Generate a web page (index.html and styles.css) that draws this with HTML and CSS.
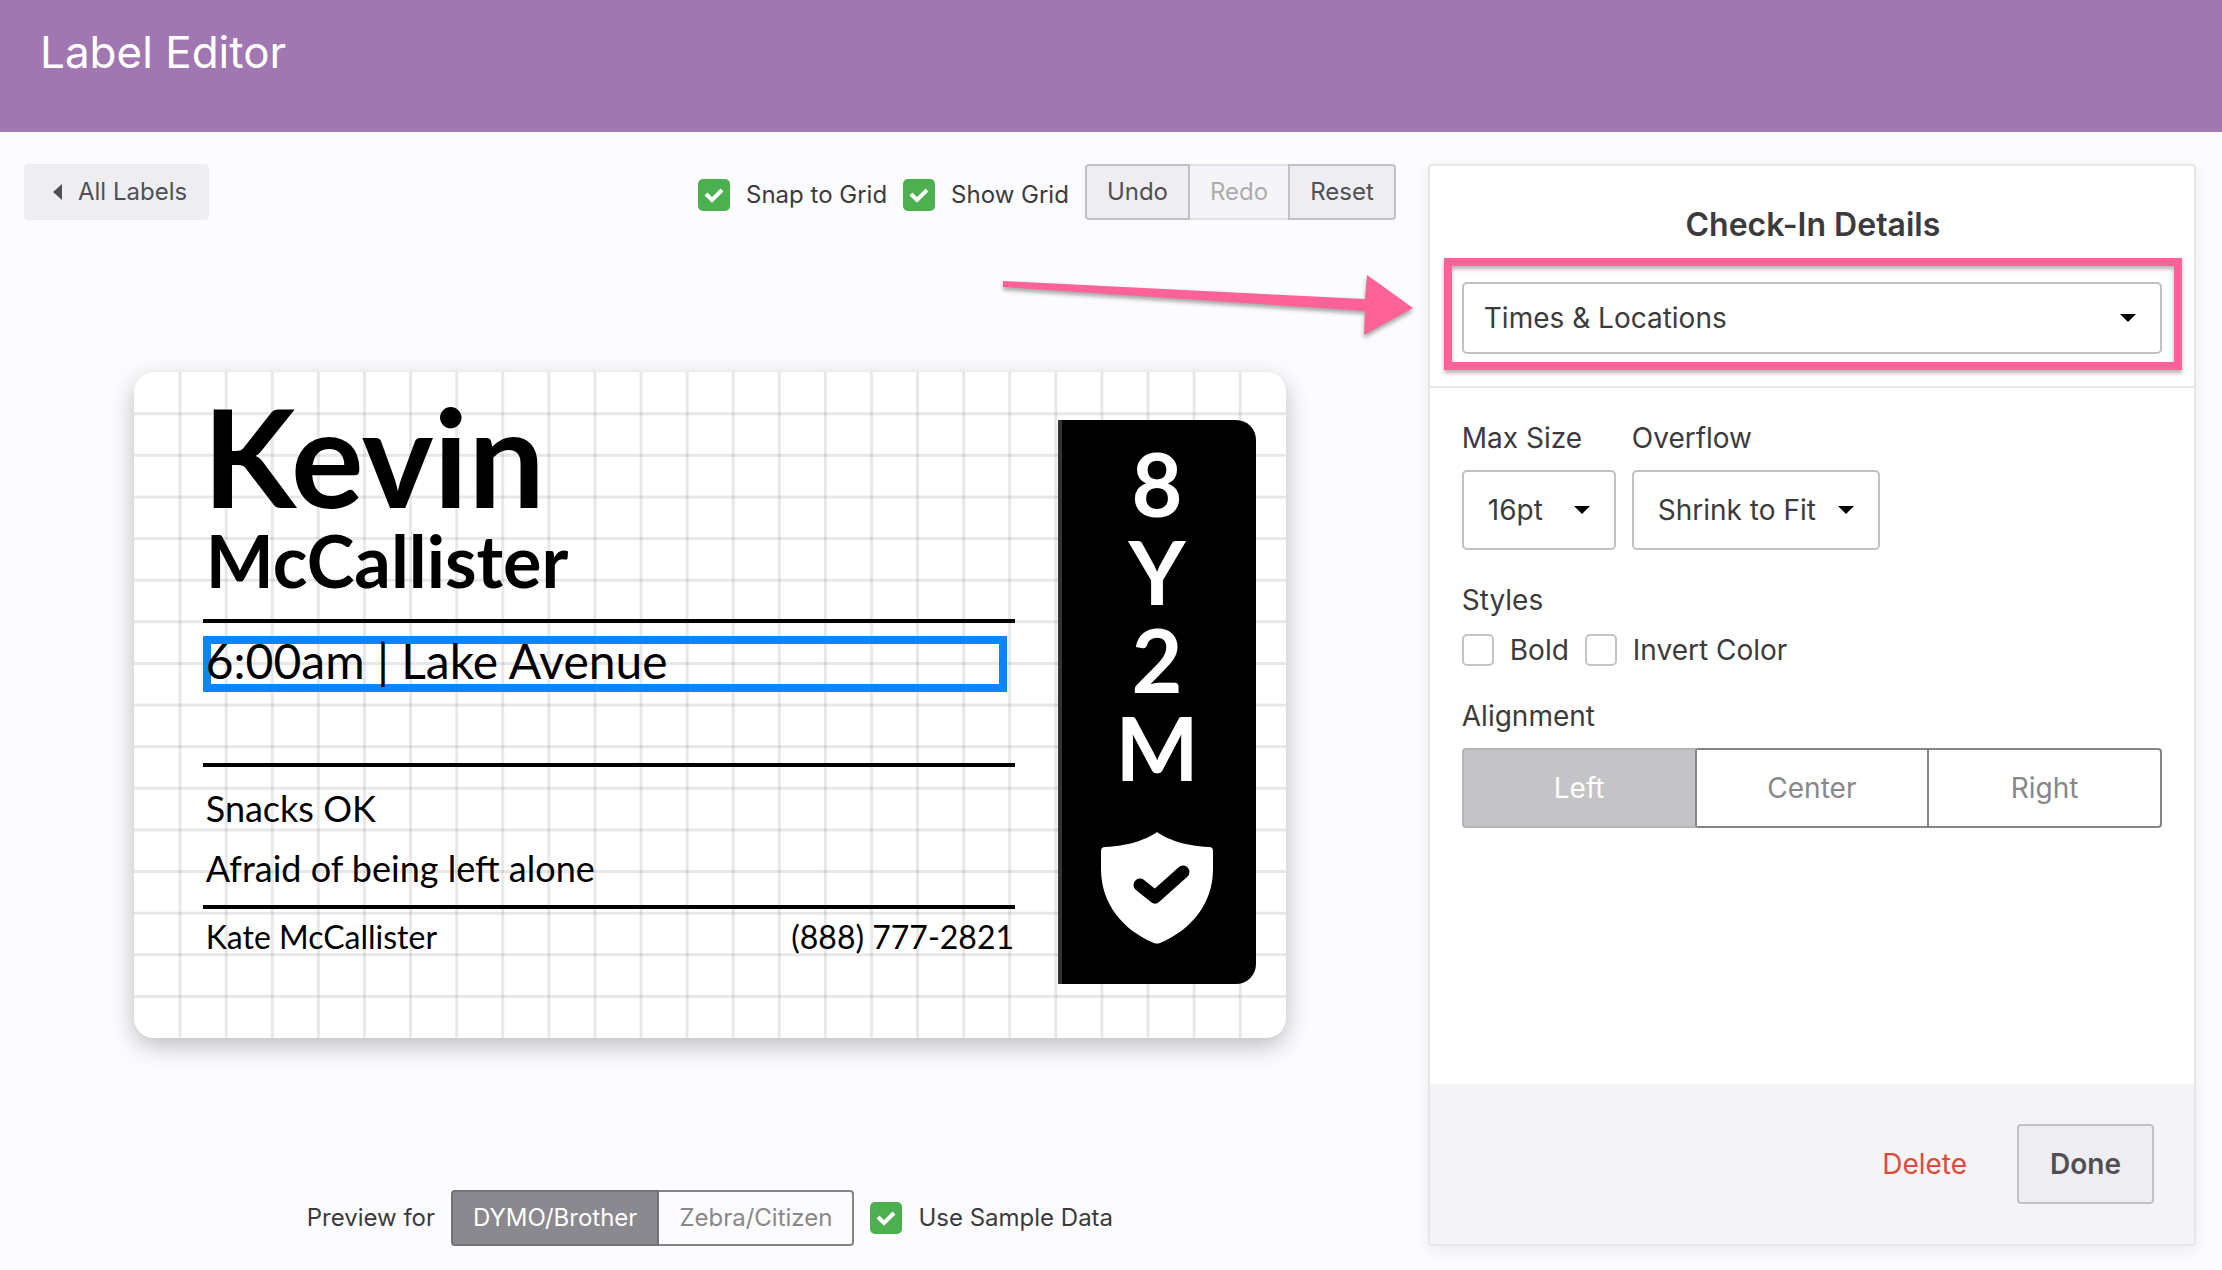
FILE: index.html
```html
<!DOCTYPE html>
<html lang="en">
<head>
<meta charset="utf-8">
<title>Label Editor</title>
<link rel="stylesheet" href="styles.css">
</head>
<body>
<header class="page-header"><h1 class="page-title">Label Editor</h1></header>
<main class="editor">
  <section class="workspace">
    <div class="toolbar">
      <button class="btn btn-back" type="button">
        <svg class="back-icon" viewBox="0 0 9 16" aria-hidden="true"><path d="M9 0v16L0 8z"/></svg>All Labels
      </button>
      <div class="toolbar-tools">
        <label class="check"><input type="checkbox" checked><span>Snap to Grid</span></label>
        <label class="check"><input type="checkbox" checked><span>Show Grid</span></label>
        <div class="btn-group">
          <button class="btn" type="button">Undo</button>
          <button class="btn" type="button" disabled>Redo</button>
          <button class="btn" type="button">Reset</button>
        </div>
      </div>
    </div>
    <div class="stage">
      <div class="label-card">
        <svg class="label-grid" viewBox="0 0 25 16" preserveAspectRatio="none" aria-hidden="true">
          <path d="M1 0v16M2 0v16M3 0v16M4 0v16M5 0v16M6 0v16M7 0v16M8 0v16M9 0v16M10 0v16M11 0v16M12 0v16M13 0v16M14 0v16M15 0v16M16 0v16M17 0v16M18 0v16M19 0v16M20 0v16M21 0v16M22 0v16M23 0v16M24 0v16"/>
          <path d="M0 1h25M0 2h25M0 3h25M0 4h25M0 5h25M0 6h25M0 7h25M0 8h25M0 9h25M0 10h25M0 11h25M0 12h25M0 13h25M0 14h25M0 15h25"/>
        </svg>
        <div class="label-text">
          <div class="first-name">Kevin</div>
          <div class="last-name">McCallister</div>
          <hr class="rule rule-names">
          <div class="selected-field">6:00am | Lake Avenue</div>
          <hr class="rule rule-checkin">
          <div class="note">Snacks OK</div>
          <div class="note">Afraid of being left alone</div>
          <hr class="rule rule-notes">
          <div class="guardian"><span>Kate McCallister</span><span>(888) 777-2821</span></div>
        </div>
        <div class="age-band">
          <div>8</div><div>Y</div><div>2</div><div>M</div>
          <svg class="shield" viewBox="0 0 112 112" aria-hidden="true">
            <path fill="#fff" d="M56 0C64 6 82 14 108 15q4 0 4 4v18C112 72 90 98 59 111q-3 1-6 0C22 98 0 72 0 37V19q0-4 4-4C30 14 48 6 56 0z"/>
            <path fill="none" stroke="#000" stroke-width="13" stroke-linecap="round" stroke-linejoin="round" d="M39 53l15 12 28-25"/>
          </svg>
        </div>
      </div>
    </div>
    <div class="preview-bar">
      <span>Preview for</span>
      <div class="segments segments-small">
        <button class="segment is-active" type="button">DYMO/Brother</button>
        <button class="segment" type="button">Zebra/Citizen</button>
      </div>
      <label class="check"><input type="checkbox" checked><span>Use Sample Data</span></label>
    </div>
    <svg class="callout-arrow" viewBox="0 0 416 70" aria-hidden="true"><path d="M3 9L365 27 367 3 413 36 364 63 365 39 3 15z"/></svg>
  </section>

  <aside class="panel">
    <div class="panel-head">
      <h2 class="panel-title">Check-In Details</h2>
      <div class="callout-box">
        <div class="select select-wide">
          <select aria-label="Check-in details"><option>Times &amp; Locations</option></select>
          <svg class="caret" viewBox="0 0 16 8" aria-hidden="true"><path d="M0 0h16L8 8z"/></svg>
        </div>
      </div>
    </div>
    <div class="panel-body">
      <div class="field-row">
        <div class="field field-size">
          <label for="max-size">Max Size</label>
          <div class="select">
            <select id="max-size"><option>16pt</option></select>
            <svg class="caret" viewBox="0 0 16 8" aria-hidden="true"><path d="M0 0h16L8 8z"/></svg>
          </div>
        </div>
        <div class="field field-overflow">
          <label for="overflow">Overflow</label>
          <div class="select">
            <select id="overflow"><option>Shrink to Fit</option></select>
            <svg class="caret" viewBox="0 0 16 8" aria-hidden="true"><path d="M0 0h16L8 8z"/></svg>
          </div>
        </div>
      </div>
      <fieldset class="group">
        <legend>Styles</legend>
        <div class="style-row">
          <label class="check"><input type="checkbox"><span>Bold</span></label>
          <label class="check"><input type="checkbox"><span>Invert Color</span></label>
        </div>
      </fieldset>
      <fieldset class="group group-align">
        <legend>Alignment</legend>
        <div class="segments">
          <button class="segment is-active" type="button">Left</button>
          <button class="segment" type="button">Center</button>
          <button class="segment" type="button">Right</button>
        </div>
      </fieldset>
    </div>
    <div class="panel-foot">
      <a class="delete" href="#">Delete</a>
      <button class="btn btn-done" type="button">Done</button>
    </div>
  </aside>
</main>
</body>
</html>
```
FILE: styles.css
```css
* { box-sizing: border-box; }

body {
  margin: 0;
  min-height: 100vh;
  display: flex;
  flex-direction: column;
  background: #fcfcfe;
  color: #3b3b3d;
  font: 24px/32px Inter, "Liberation Sans", sans-serif;
}

button, select { font: inherit; color: inherit; margin: 0; }
h1, h2 { margin: 0; }

.page-header {
  height: 132px;
  padding: 24px 40px;
  background: #a177b2;
}

.page-title {
  color: #fff;
  font-size: 44px;
  line-height: 56px;
  font-weight: 400;
}

.editor {
  flex: 1;
  display: grid;
  grid-template-columns: minmax(0, 25fr) minmax(0, 14fr);
  gap: 32px;
  padding: 32px 26px 24px 24px;
}

.workspace {
  position: relative;
  display: flex;
  flex-direction: column;
}

.toolbar, .toolbar-tools, .preview-bar, .style-row { display: flex; align-items: center; }
.toolbar { justify-content: space-between; }
.toolbar-tools { gap: 16px; }
.toolbar-tools .check { padding-top: 6px; }

.btn {
  height: 56px;
  padding: 0 20px;
  border: 2px solid #c1c0c4;
  border-radius: 4px;
  background: #eeedf1;
  color: #505054;
}

.btn-back {
  display: flex;
  align-items: center;
  gap: 16px;
  padding: 0 20px 0 27px;
  border-color: #eeedf1;
}

.back-icon { width: 9px; height: 16px; fill: #505054; }

.btn-group { display: flex; }
.btn-group .btn { border-radius: 0; }
.btn-group .btn:first-child { border-radius: 4px 0 0 4px; }
.btn-group .btn:last-child { border-radius: 0 4px 4px 0; }
.btn-group .btn:disabled {
  border-color: #e2e2e5;
  border-width: 2px 0;
  background: #f5f5f7;
  color: #acacae;
}

.check { display: flex; align-items: center; gap: 16px; }

.check input {
  appearance: none;
  width: 32px;
  height: 32px;
  margin: 0;
  border: 2px solid #c4c4c6;
  border-radius: 5px;
  background: #fff;
}

.check input:checked {
  border: 0;
  background: #4caf50 url("data:image/svg+xml,%3Csvg xmlns='http://www.w3.org/2000/svg' viewBox='0 0 32 32'%3E%3Cpath d='M8 15l6 6L24 11' fill='none' stroke='%23fff' stroke-width='4'/%3E%3C/svg%3E") center / 32px 32px;
}

.stage {
  flex: 1;
  display: flex;
  align-items: center;
  justify-content: center;
}

.label-card {
  position: relative;
  display: flex;
  align-items: flex-start;
  gap: 43px;
  width: 84%;
  min-height: 666px;
  padding: 28px 30px 54px 69px;
  border-radius: 20px;
  background: #fff;
  box-shadow: 0 8px 24px rgba(0, 0, 0, 0.25);
  color: #000;
  font-family: Lato, "Liberation Sans", sans-serif;
}

.label-grid {
  position: absolute;
  inset: 0;
  width: 100%;
  height: 100%;
  fill: none;
  stroke: rgba(0, 0, 0, 0.09);
  stroke-width: 3px;
}

.label-grid path { vector-effect: non-scaling-stroke; }

.label-text { position: relative; flex: 1; }
.first-name { font-size: 136px; line-height: 112px; font-weight: 700; }
.last-name { padding-left: 3px; font-size: 72px; line-height: 96px; font-weight: 700; }

.rule { height: 4px; margin: 0; border: 0; background: #000; }
.rule-names { margin: 11px 0 13px; }
.rule-checkin { margin: 71px 0 11px; }
.rule-notes { margin: 7px 0 4px; }

.selected-field {
  width: 99%;
  padding: 9px 3px 15px;
  box-shadow: inset 0 0 0 8px #0a84ff;
  font-size: 48px;
  line-height: 32px;
}

.note { padding-left: 3px; font-size: 36px; line-height: 60px; }

.guardian {
  display: flex;
  justify-content: space-between;
  padding: 0 1px 0 3px;
  font-size: 32px;
  line-height: 48px;
}

.age-band {
  position: relative;
  width: 198px;
  margin-top: 20px;
  padding: 19px 4px 40px 0;
  border-left: 4px solid #333;
  border-radius: 0 20px 20px 0;
  background: #000;
  color: #fff;
  font-size: 88px;
  line-height: 88px;
  font-weight: 700;
  text-align: center;
}

.shield { display: block; width: 112px; height: 112px; margin: 41px auto 0; }

.preview-bar { justify-content: center; gap: 16px; }

.segments { display: flex; color: #88888a; }

.segment {
  flex: 1;
  height: 80px;
  padding: 0 20px;
  border: 2px solid #858587;
  border-left-width: 0;
  background: #fff;
}

.segment:first-child { border-left-width: 2px; border-radius: 4px 0 0 4px; }
.segment:last-child { border-radius: 0 4px 4px 0; }

.segment.is-active {
  border-color: #b4b4b6 #858587 #b4b4b6 #b4b4b6;
  background: #c4c4c6;
  color: #fff;
}

.segments-small .segment { flex: none; height: 56px; background: #fcfcfe; }
.segments-small .segment.is-active { border-color: #737277; background: #8a898f; }

.callout-arrow {
  position: absolute;
  top: 108px;
  right: -20px;
  width: 416px;
  height: 70px;
  fill: #ff6296;
  filter: drop-shadow(0 3px 2px rgba(0, 0, 0, 0.35));
}

.panel {
  display: flex;
  flex-direction: column;
  border: 2px solid #e7e7ea;
  border-radius: 4px;
  background: #fff;
  box-shadow: 0 4px 16px rgba(40, 40, 60, 0.08);
  font-size: 28px;
  line-height: 40px;
}

.panel-head { padding: 39px 12px 16px 14px; border-bottom: 2px solid #e7e7ea; }

.panel-title {
  margin-bottom: 13px;
  font-size: 32px;
  line-height: 40px;
  font-weight: 600;
  text-align: center;
}

.callout-box {
  padding: 16px 12px 8px 10px;
  border: 8px solid #ff6296;
  box-shadow: 0 3px 4px rgba(0, 0, 0, 0.3), inset 0 3px 4px rgba(0, 0, 0, 0.3);
}

.select { position: relative; }

.select select {
  appearance: none;
  display: block;
  width: 100%;
  height: 80px;
  padding: 0 24px;
  border: 2px solid #c1c1c3;
  border-radius: 5px;
  background: #fff;
}

.select-wide select { height: 72px; padding: 0 20px; }

.caret {
  position: absolute;
  top: 50%;
  right: 26px;
  width: 16px;
  height: 8px;
  margin-top: -4px;
  fill: #000;
  pointer-events: none;
}

.panel-body { flex: 1; padding: 30px 32px; }
.field-row { display: flex; gap: 16px; }
.field label { display: block; margin-bottom: 12px; }
.field-size { width: 154px; }
.field-overflow { width: 248px; }

.group { min-width: 0; margin: 30px 0 0; padding: 0; border: 0; }
.group legend { padding: 0; }
.style-row { gap: 16px; margin-top: 10px; }
.group-align { margin-top: 26px; }
.group-align .segments { margin-top: 12px; }

.panel-foot {
  display: flex;
  align-items: center;
  justify-content: flex-end;
  gap: 50px;
  padding: 40px;
  background: #f4f4f6;
}

.delete { color: #dd4b3e; text-decoration: none; }
.btn-done { height: 80px; padding: 0 31px; font-weight: 600; }
```
